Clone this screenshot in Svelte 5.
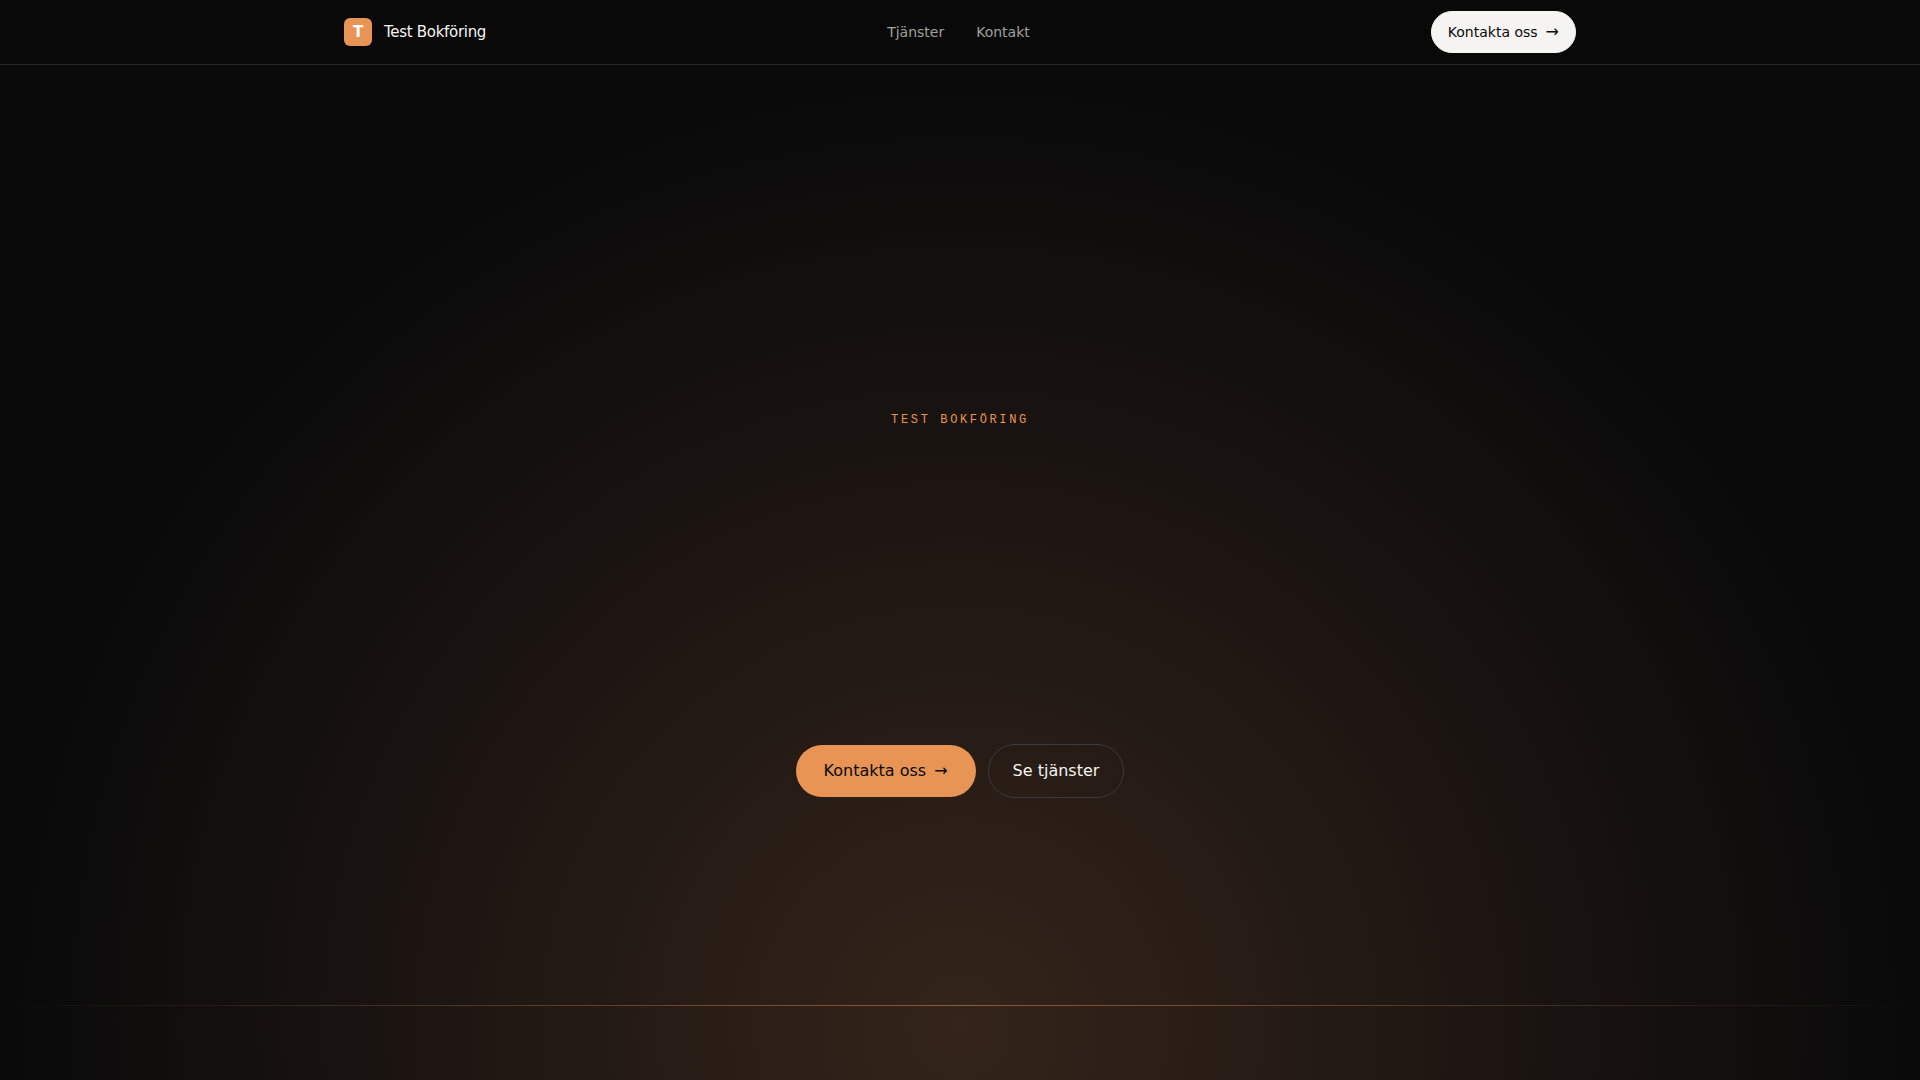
<script lang="ts">
  type NavItem = { label: string; href: string };

  const brand = "Test Bokföring";
  const nav: NavItem[] = [
    { label: "Tjänster", href: "#tjanster" },
    { label: "Kontakt", href: "#kontakt" },
  ];
</script>

<header class="site-header">
  <div class="site-header__inner">
    <a class="brand" href="/">
      <span class="brand__mark" aria-hidden="true">{brand[0]}</span>
      <span class="brand__name">{brand}</span>
    </a>

    <nav class="site-nav" aria-label="Huvudmeny">
      {#each nav as item (item.href)}
        <a href={item.href}>{item.label}</a>
      {/each}
    </nav>

    <a class="btn btn--light" href="#kontakt">
      Kontakta oss <span class="btn__arrow" aria-hidden="true">→</span>
    </a>
  </div>
</header>

<main class="hero">
  <p class="hero__eyebrow">{brand}</p>
  <div class="hero__actions">
    <a class="btn btn--accent" href="#kontakt">
      Kontakta oss <span class="btn__arrow" aria-hidden="true">→</span>
    </a>
    <a class="btn btn--outline" href="#tjanster">Se tjänster</a>
  </div>
  <div class="hero__horizon"></div>
</main>

<style>
  :global(body) {
    margin: 0;
    background: #0a0a0b;
    color: #f5f4f0;
    font-family: "DejaVu Sans", sans-serif;
  }
  a {
    color: inherit;
    text-decoration: none;
  }
  .site-header {
    position: fixed;
    inset: 0 0 auto;
    z-index: 10;
    background: #09090a;
    border-bottom: 1px solid #27272c;
  }
  .site-header__inner {
    box-sizing: border-box;
    max-width: 1280px;
    height: 64px;
    margin: 0 auto;
    padding: 0 24px;
    display: flex;
    align-items: center;
    justify-content: space-between;
  }
  .brand {
    display: flex;
    align-items: center;
    gap: 12px;
    font-size: 15px;
    letter-spacing: -0.02em;
  }
  .brand__mark {
    display: grid;
    place-items: center;
    width: 28px;
    height: 28px;
    border-radius: 6px;
    background: #e89455;
    color: #fff;
    font-weight: 700;
  }
  .site-nav {
    display: flex;
    gap: 32px;
    color: #a1a09b;
    font-size: 14px;
  }
  .btn {
    display: inline-flex;
    align-items: center;
    gap: 8px;
    border-radius: 999px;
    font-size: 16px;
    line-height: 24px;
  }
  .btn__arrow {
    font-size: 16px;
  }
  .btn--light {
    padding: 10px 16px;
    border: 1px solid #f5f4f0;
    background: #f5f4f0;
    color: #0a0a0b;
    font-size: 14px;
    line-height: 20px;
  }
  .btn--accent {
    padding: 14px 28px;
    background: #e89455;
    color: #0a0a0b;
  }
  .btn--outline {
    padding: 14px 24px;
    border: 1px solid #3a3a42;
  }
  .hero {
    position: relative;
    box-sizing: border-box;
    min-height: 100vh;
    padding-top: 411px;
    display: flex;
    flex-direction: column;
    align-items: center;
    background: radial-gradient(ellipse 49% 87% at 50% 95%, #34241a, #0a0a0b);
  }
  .hero__eyebrow {
    margin: 0 0 315px;
    color: #e89455;
    font-family: "Liberation Mono", monospace;
    font-size: 12px;
    line-height: 18px;
    letter-spacing: 0.22em;
    text-transform: uppercase;
  }
  .hero__actions {
    display: flex;
    align-items: center;
    gap: 12px;
  }
  .hero__horizon {
    position: absolute;
    inset: auto 0 74px;
    height: 1px;
    background: linear-gradient(90deg, transparent, #e89455, transparent);
    opacity: 0.5;
  }
</style>
